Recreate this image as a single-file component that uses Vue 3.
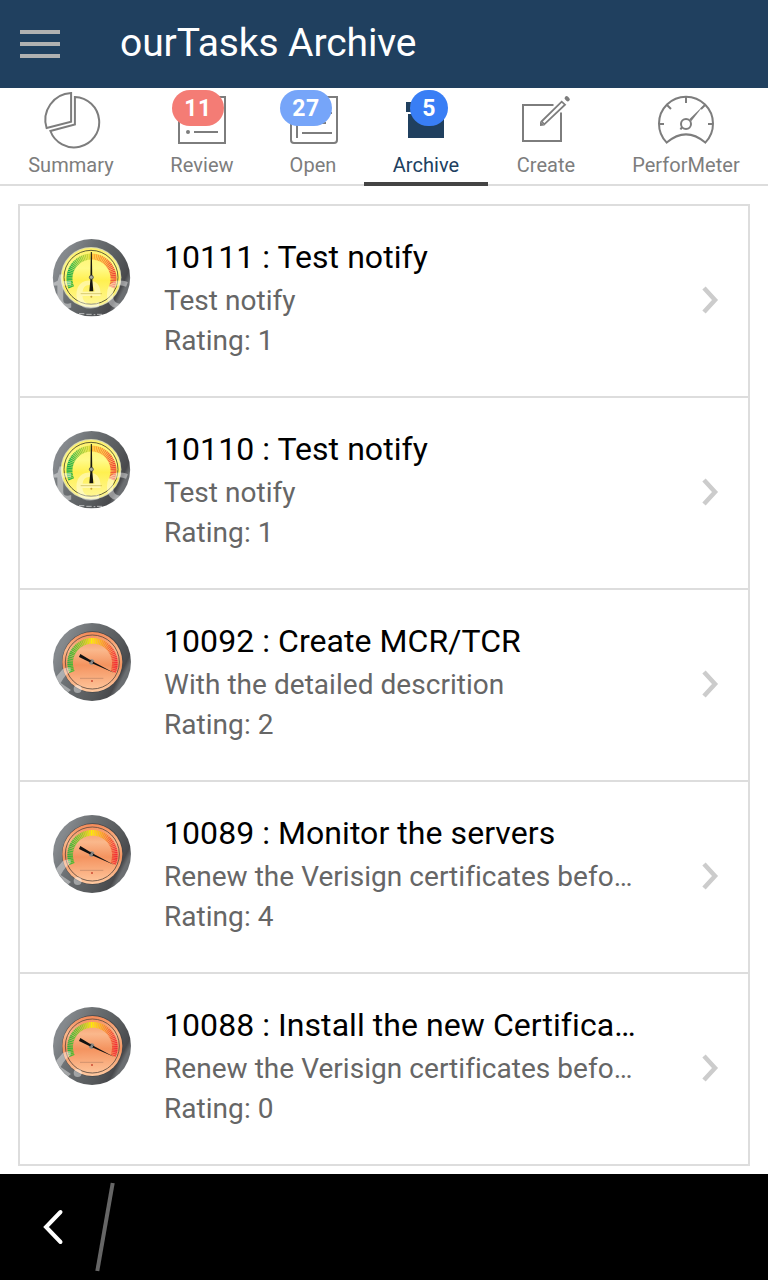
<script setup>
import { reactive } from 'vue'

const tabs = reactive([
  { name: 'Summary', box: '41 90 60 60' },
  { name: 'Review', box: '172 90 60 60', badge: '11', tone: 'red' },
  { name: 'Open', box: '283 90 60 60', badge: '27', tone: 'sky' },
  { name: 'Archive', box: '396 90 60 60', badge: '5', tone: 'blue', active: true },
  { name: 'Create', box: '516 90 60 60' },
  { name: 'PerforMeter', box: '656 90 60 60' },
])

const tasks = [
  { id: '10111', title: 'Test notify', text: 'Test notify', rating: 1, gauge: 'yellow' },
  { id: '10110', title: 'Test notify', text: 'Test notify', rating: 1, gauge: 'yellow' },
  { id: '10092', title: 'Create MCR/TCR', text: 'With the detailed descrition', rating: 2, gauge: 'orange' },
  { id: '10089', title: 'Monitor the servers', text: 'Renew the Verisign certificates befo…', rating: 4, gauge: 'orange' },
  { id: '10088', title: 'Install the new Certifica…', text: 'Renew the Verisign certificates befo…', rating: 0, gauge: 'orange' },
]
</script>

<template>
  <div class="screen">
    <header class="header">
      <div class="burger"><i></i><i></i><i></i></div>
      <h1>ourTasks Archive</h1>
    </header>

    <nav class="tabs">
      <div v-for="tab in tabs" :key="tab.name" class="tab" :class="{ active: tab.active }">
        <svg class="tab-icon" :viewBox="tab.box" width="60" height="60">
          <g v-if="tab.name === 'Summary'" class="line">
            <path d="M71.100 93 A27 27 0 0 0 46.600 128 L71.100 121.800 Z" />
            <path d="M74.900 97 V124.500 L50.400 131 A25.200 25.200 0 1 0 74.900 97 Z" />
          </g>
          <g v-else-if="tab.name === 'Review'" class="line">
            <path d="M179 97 H225 V143 H179 Z M194 132 H218 M194 118 H218" />
            <circle class="fill" cx="188" cy="132" r="2" />
          </g>
          <g v-else-if="tab.name === 'Open'" class="line">
            <path d="M291 97 H337 V140 Q337 143 334 143 H294 Q291 143 291 140 Z M297 108 V138 M302 133 H332 M302 123 H326 M302 113 H332" />
          </g>
          <g v-else-if="tab.name === 'Archive'" class="solid">
            <path d="M406 102 H446 V112 H406 Z M408 114 H444 V138 H408 Z" />
          </g>
          <g v-else-if="tab.name === 'Create'" class="line">
            <path d="M553.500 105 H523 V141 H561 V112.500" />
            <path class="barrel" d="M541.500 121.500 L561.700 101.700 L565 104.700 L544.300 124.300 Z" />
            <path class="fill" d="M540 121.500 L544.500 125.500 L540 126 Z" />
            <path class="cap" d="M566.600 98.200 L567.800 99.400" />
          </g>
          <g v-else class="line">
            <path d="M666.700 142.600 A27 27 0 1 1 705.300 142.600 Q686 126.200 666.700 142.600 Z" />
            <path d="M686 97 V103 M659 124 H664 M713 124 H708 M667 105 L671 109 M705 105 L701 109" />
            <circle cx="686" cy="124" r="5" />
            <path d="M682 127 L680.500 129.500" />
            <path class="fill" d="M689.500 119 L704 105 L691 121.500 Z" />
          </g>
        </svg>
        <span v-if="tab.badge" class="badge" :class="tab.tone">{{ tab.badge }}</span>
        <span class="label">{{ tab.name }}</span>
      </div>
    </nav>

    <main class="content">
      <svg class="defs" width="0" height="0">
        <defs>
          <linearGradient id="bezel" x1="0.1" y1="0.3" x2="0.9" y2="0.7">
            <stop offset="0" stop-color="#85898d" />
            <stop offset="0.3" stop-color="#6c7073" />
            <stop offset="0.75" stop-color="#55585a" />
            <stop offset="0.94" stop-color="#48494c" />
            <stop offset="1" stop-color="#6b6e71" />
          </linearGradient>
          <linearGradient id="faceYellow" x1="0" y1="0" x2="0" y2="1">
            <stop offset="0" stop-color="#fff16a" />
            <stop offset="0.35" stop-color="#fffa88" />
            <stop offset="0.55" stop-color="#fff050" />
            <stop offset="1" stop-color="#fff79a" />
          </linearGradient>
          <linearGradient id="faceOrange" x1="0" y1="0" x2="0" y2="1">
            <stop offset="0" stop-color="#f58a58" />
            <stop offset="0.3" stop-color="#fab88c" />
            <stop offset="0.55" stop-color="#f4935f" />
            <stop offset="1" stop-color="#ffc9a0" />
          </linearGradient>
          <linearGradient id="scaleYellow" gradientUnits="userSpaceOnUse" x1="82" y1="0" x2="225" y2="0">
            <stop offset="0" stop-color="#08ac4c" />
            <stop offset="0.25" stop-color="#8cc83e" />
            <stop offset="0.5" stop-color="#e5dc31" />
            <stop offset="0.51" stop-color="#ffb52d" />
            <stop offset="0.8" stop-color="#f78a32" />
            <stop offset="1" stop-color="#ef3d38" />
          </linearGradient>
          <linearGradient id="scaleOrange" gradientUnits="userSpaceOnUse" x1="82" y1="0" x2="230" y2="0">
            <stop offset="0" stop-color="#27b13c" />
            <stop offset="0.3" stop-color="#9bc927" />
            <stop offset="0.5" stop-color="#fff000" />
            <stop offset="0.75" stop-color="#f7942d" />
            <stop offset="1" stop-color="#f12b3a" />
          </linearGradient>
          <clipPath id="dial"><circle cx="155" cy="158" r="116" /></clipPath>
        </defs>
      </svg>

      <ul class="list">
        <li v-for="task in tasks" :key="task.id" class="row">
          <svg v-if="task.gauge === 'yellow'" class="gauge" viewBox="36 39 240 240" width="80" height="80">
            <circle cx="154.500" cy="158" r="116" fill="url(#bezel)" />
            <circle cx="153" cy="157" r="91" fill="#d8d8b0" />
            <circle cx="153" cy="157" r="88" fill="url(#faceYellow)" />
            <circle cx="153" cy="157" r="81" fill="none" stroke="#45432a" stroke-width="2.500" />
            <path d="M94 187 A66 66 0 1 1 215 187" fill="none" stroke="url(#scaleYellow)" stroke-width="18" stroke-dasharray="4 1.300" />
            <text class="mark" x="38" y="250" textLength="230">tec</text>
            <path class="ticks" d="M117 266 H133 M139 268 H155 M161 269 H166 M171 268 H186" />
            <path d="M152.500 81 H155.500 L157 165 L160 199 H148 L151 165 Z" fill="#171711" />
            <circle cx="154" cy="157" r="6" fill="#aab0a0" stroke="#333" stroke-width="2" />
            <path d="M122 206 H186" stroke="#b59f35" stroke-width="1.500" />
            <circle cx="154" cy="215" r="3" fill="#c6a23a" />
          </svg>
          <svg v-else class="gauge" viewBox="36 39 240 240" width="80" height="80">
            <circle cx="156" cy="159" r="117" fill="url(#bezel)" />
            <circle cx="158" cy="159" r="92" fill="#45474a" />
            <circle cx="157" cy="159" r="90" fill="url(#faceOrange)" />
            <circle cx="157" cy="159" r="81" fill="none" stroke="#5d4a40" stroke-width="2.500" />
            <path d="M96 189 A67 67 0 1 1 219 189" fill="none" stroke="url(#scaleOrange)" stroke-width="17" stroke-dasharray="4 1.300" />
            <path d="M120 208 H190" stroke="#a87960" stroke-width="1.500" />
            <circle cx="156" cy="216" r="3" fill="#cc4b35" />
            <g clip-path="url(#dial)" class="streak">
              <path d="M38 216 L68 181 Q76 174 92 176 V187 C82 192 72 204 62 222 L93 243 L78 254 L46 232 Z" />
              <circle cx="113" cy="240" r="12" />
            </g>
            <circle cx="155" cy="159" r="8" fill="#8e8b86" />
            <path d="M223 192 L157 157 L121 135 L117 144 L154 162 Z" fill="#111" />
            <circle cx="155" cy="160" r="4" fill="#888" />
          </svg>

          <div class="text">
            <div class="title">{{ task.id }} : {{ task.title }}</div>
            <div class="sub">{{ task.text }}</div>
            <div class="sub">Rating: {{ task.rating }}</div>
          </div>

          <svg class="chevron" viewBox="0 0 20 32" width="20" height="32">
            <path d="M4 4 L15 16 L4 28" />
          </svg>
        </li>
      </ul>
    </main>

    <footer class="footer">
      <svg viewBox="0 0 160 106" width="160" height="106">
        <path class="back" d="M60.500 38 L46 53 L60.500 68" />
        <path class="slash" d="M112.700 9 L97.300 97" />
      </svg>
    </footer>
  </div>
</template>

<style>
body {
  margin: 0;
  background: #fff;
}
</style>

<style scoped>
.screen {
  width: 768px;
  height: 1280px;
  display: flex;
  flex-direction: column;
  overflow: hidden;
  background: #fff;
  font-family: Roboto, "Liberation Sans", sans-serif;
  font-variant-ligatures: none;
}

.header {
  height: 88px;
  flex: none;
  box-sizing: border-box;
  padding-left: 20px;
  display: flex;
  align-items: center;
  background: #20405f;
}

.burger {
  width: 40px;
  display: grid;
  gap: 8px;
}

.burger i {
  height: 4px;
  background: #b1b1b1;
}

h1 {
  margin: 0 0 2px 60px;
  font-size: 39px;
  font-weight: 400;
  line-height: 50px;
  letter-spacing: -0.1px;
  color: #fff;
  white-space: nowrap;
}

.tabs {
  height: 98px;
  flex: none;
  display: grid;
  grid-template-columns: 142px 120px 102px 124px 116px 164px;
}

.tab {
  position: relative;
  box-sizing: border-box;
  padding-top: 2px;
  border-bottom: 2px solid #ddd;
  display: flex;
  flex-direction: column;
  align-items: center;
  color: #7d7d7d;
}

.tab.active {
  border-bottom: 4px solid #444;
  color: #20405f;
}

.line {
  fill: none;
  stroke: #7d7d7d;
  stroke-width: 2;
}

.fill {
  fill: #7d7d7d;
  stroke: none;
}

.barrel {
  fill: #fff;
  stroke-width: 1.8;
}

.cap {
  stroke-width: 4;
  stroke-linecap: round;
}

.solid {
  fill: #20405f;
}

.label {
  margin-top: 2px;
  font-size: 20px;
  line-height: 26px;
  letter-spacing: 0.05px;
  white-space: nowrap;
}

.badge {
  position: absolute;
  top: 2px;
  left: 30px;
  width: 52px;
  height: 36px;
  border-radius: 18px;
  color: #fff;
  font-size: 23px;
  font-weight: 700;
  line-height: 37px;
  text-align: center;
  letter-spacing: 0.5px;
}

.red {
  background: #f47c75;
}

.sky {
  left: 18px;
  background: #76a5f9;
}

.blue {
  left: 46px;
  width: 38px;
  background: #397ef5;
}

.content {
  flex: 1;
  padding: 18px 18px 0;
}

.defs {
  position: absolute;
}

.list {
  margin: 0;
  padding: 0;
  list-style: none;
  border: 2px solid #ddd;
  border-bottom: none;
}

.row {
  height: 192px;
  box-sizing: border-box;
  padding: 31px 28px 0 32px;
  border-bottom: 2px solid #ddd;
  display: flex;
  align-items: flex-start;
}

.gauge {
  flex: none;
  margin-top: 1px;
}

.text {
  width: 480px;
  margin-left: 32px;
}

.title {
  overflow: hidden;
  text-overflow: ellipsis;
  white-space: nowrap;
  font-size: 32px;
  line-height: 40px;
  letter-spacing: 0.06px;
  color: #000;
}

.sub {
  overflow: hidden;
  text-overflow: ellipsis;
  white-space: nowrap;
  font-size: 28px;
  line-height: 40px;
  letter-spacing: 0.04px;
  color: #666;
}

.title + .sub {
  margin-top: 4px;
}

.chevron {
  margin: 47px 0 0 auto;
  fill: none;
  stroke: #ccc;
  stroke-width: 4.5;
}

.mark {
  fill: #fff;
  opacity: 0.42;
  font-family: "Open Sans", sans-serif;
  font-size: 150px;
  font-weight: 600;
}

.ticks {
  stroke: #fff;
  stroke-width: 3;
  opacity: 0.6;
}

.streak {
  fill: #fff;
  opacity: 0.4;
}

.footer {
  height: 106px;
  flex: none;
  background: #000;
}

.back {
  fill: none;
  stroke: #fff;
  stroke-width: 4;
  stroke-linecap: round;
}

.slash {
  stroke: #666;
  stroke-width: 4;
}
</style>
